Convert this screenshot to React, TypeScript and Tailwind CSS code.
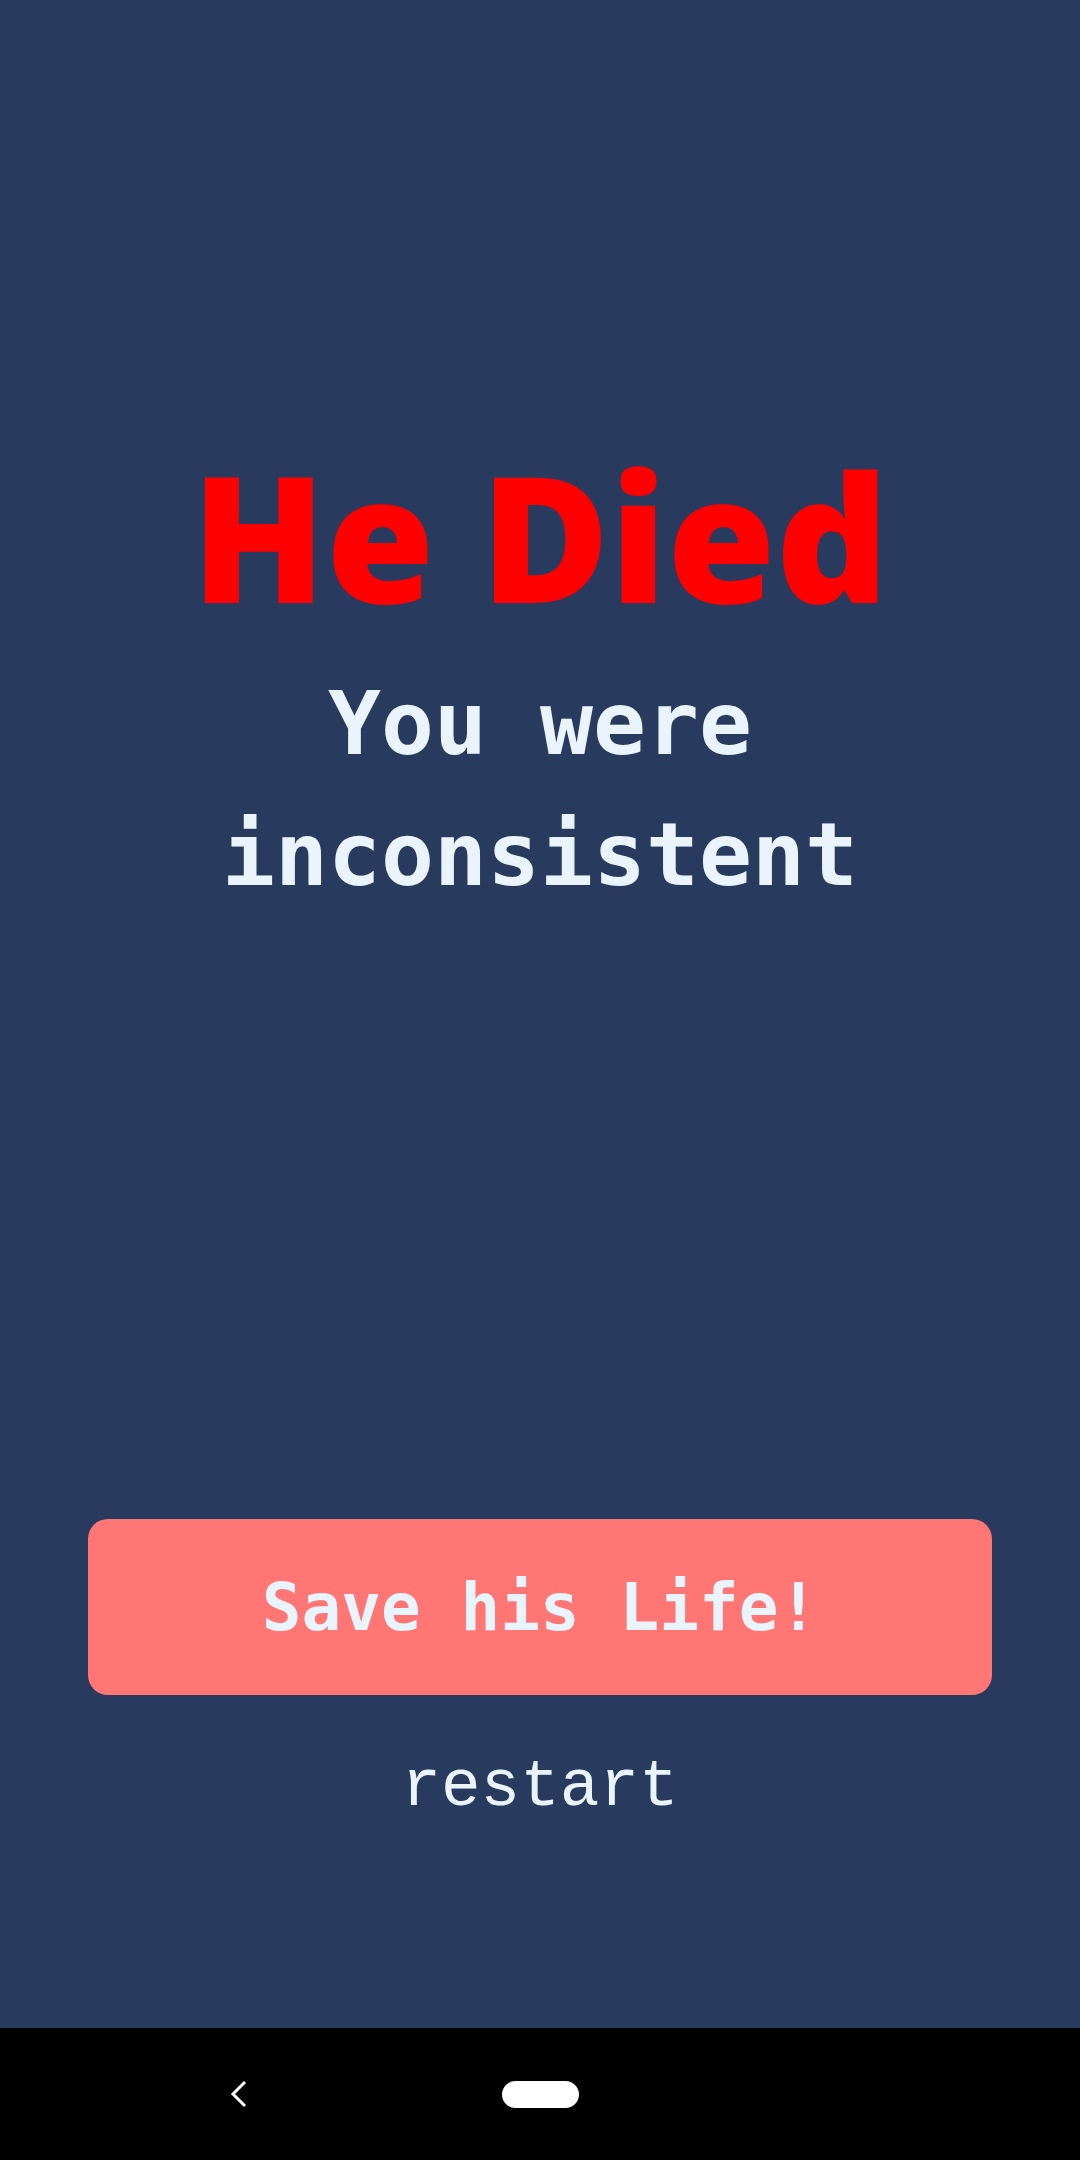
export default function App() {
  return (
    <div className="w-[1080px] h-[2160px] flex flex-col bg-[#283b5e] overflow-hidden">
      <main className="flex-1 flex flex-col items-center pt-[447px] pb-[200px]">
        <h1
          className="text-[176px] leading-[176px] text-[#ff0000] m-0"
          style={{ fontFamily: '"Open Sans", sans-serif', fontWeight: 800 }}
        >
          He Died
        </h1>
        <p
          className="mt-[35px] text-[88px] leading-[131px] font-bold text-[#eaf4fd] text-center w-[760px]"
          style={{ fontFamily: '"DejaVu Sans Mono", monospace' }}
        >
          You were
          <br />
          inconsistent
        </p>
        <div className="flex-1" />
        <button
          className="w-[904px] h-[176px] rounded-[20px] bg-[#ff7674] flex items-center justify-center text-[66px] font-bold text-[#eaf4fd]"
          style={{ fontFamily: '"DejaVu Sans Mono", monospace' }}
        >
          Save his Life!
        </button>
        <div
          className="mt-[53px] text-[66px] leading-[80px] text-[#eaf4fd]"
          style={{ fontFamily: '"Liberation Mono", monospace' }}
        >
          restart
        </div>
      </main>
      <nav className="h-[132px] bg-black flex items-center relative">
        <svg
          className="absolute left-[229px] top-[52px]"
          width="20"
          height="28"
          viewBox="0 0 20 28"
        >
          <polyline points="16,2 4,14 16,26" fill="none" stroke="white" strokeWidth="3" />
        </svg>
        <div className="absolute left-[502px] top-[53px] w-[77px] h-[27px] rounded-full bg-white" />
      </nav>
    </div>
  );
}
